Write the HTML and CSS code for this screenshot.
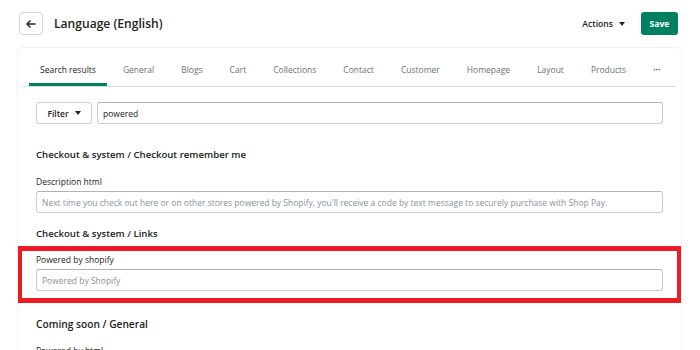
FILE: index.html
```html
<!DOCTYPE html>
<html lang="en">

<head>
    <meta charset="UTF-8">
    <title>Language (English)</title>
    <link rel="stylesheet" href="styles.css">
</head>

<body>
    <!-- ヘッダー -->
    <header class="pageHeader">
        <button class="backBtn" type="button">
            <svg width="12" height="12" viewBox="0 0 12 12">
                <path d="M10.5 6H2M5.5 2.5 2 6l3.5 3.5" fill="none" stroke="#202223" stroke-width="1.4" />
            </svg>
        </button>
        <h1 class="pageTitle">Language (English)</h1>
        <div class="headerActions">
            <button class="actionsBtn" type="button">Actions <span class="caret"></span></button>
            <button class="saveBtn" type="button">Save</button>
        </div>
    </header>

    <!-- カード -->
    <main class="card">
        <ul class="tabs">
            <li class="tab isActive">Search results</li>
            <li class="tab">General</li>
            <li class="tab">Blogs</li>
            <li class="tab">Cart</li>
            <li class="tab">Collections</li>
            <li class="tab">Contact</li>
            <li class="tab">Customer</li>
            <li class="tab">Homepage</li>
            <li class="tab">Layout</li>
            <li class="tab">Products</li>
            <li class="tab tabMore">&middot;&middot;&middot;</li>
        </ul>

        <div class="cardBody">
            <div class="filterRow">
                <button class="filterBtn" type="button">Filter <span class="caret"></span></button>
                <input class="textInput searchInput" type="text" value="powered">
            </div>

            <h2 class="groupTitle groupFirst">Checkout &amp; system / Checkout remember me</h2>
            <div class="field">
                <label class="fieldLabel">Description html</label>
                <input class="textInput" type="text" placeholder="Next time you check out here or on other stores powered by Shopify, you'll receive a code by text message to securely purchase with Shop Pay.">
            </div>

            <h2 class="groupTitle">Checkout &amp; system / Links</h2>
            <div class="field highlight">
                <label class="fieldLabel">Powered by shopify</label>
                <input class="textInput" type="text" placeholder="Powered by Shopify">
            </div>

            <h2 class="groupTitle groupTitleLarge">Coming soon / General</h2>
            <div class="field">
                <label class="fieldLabel">Powered by html</label>
            </div>
        </div>
    </main>
</body>

</html>
```

FILE: styles.css
```css
/* リセット */
body,
ul,
li,
h1,
h2,
button,
input,
label {
    margin: 0;
    padding: 0;
    box-sizing: border-box;
}

li {
    list-style: none;
}

body {
    height: 350px;
    background-color: #FFFFFF;
    font-family: 'Open Sans', 'Noto Sans', sans-serif;
    color: #202223;
    overflow: hidden;
}

/* ヘッダー */
.pageHeader {
    display: flex;
    align-items: center;
    height: 47px;
    padding: 0 22px 0 19px;
}

.backBtn {
    display: flex;
    align-items: center;
    justify-content: center;
    width: 24px;
    height: 23px;
    border: 1px solid #D2D5D8;
    border-radius: 4px;
    background-color: #FFFFFF;
}

.pageTitle {
    margin-left: 11px;
    font-size: 12.1px;
    font-weight: 600;
}

.headerActions {
    display: flex;
    align-items: center;
    margin-left: auto;
}

.actionsBtn {
    display: flex;
    align-items: center;
    border: none;
    background: none;
    font-family: inherit;
    font-size: 8.6px;
    font-weight: 600;
    color: #202223;
}

.caret {
    display: inline-block;
    margin-left: 6px;
    border-top: 4px solid #202223;
    border-left: 3px solid transparent;
    border-right: 3px solid transparent;
}

.saveBtn {
    width: 37px;
    height: 23px;
    margin-left: 16px;
    border: none;
    border-radius: 3px;
    background-color: #008060;
    font-family: inherit;
    font-size: 8.6px;
    font-weight: 700;
    color: #FFFFFF;
}

/* カード */
.card {
    height: 310px;
    margin: 0 18px 0 17px;
    border: 1px solid #F0F1F2;
    border-radius: 6px;
    overflow: hidden;
}

.tabs {
    display: flex;
    gap: 5px;
    margin: 0 5px;
    padding: 10px 0 0 6px;
    border-bottom: 1px solid #D9DADB;
}

.tab {
    height: 28px;
    padding: 0 11px;
    border-bottom: 3px solid transparent;
    font-size: 8.5px;
    line-height: 24px;
    color: #6D7175;
    white-space: nowrap;
}

.tab.isActive {
    color: #202223;
    border-bottom-color: #008060;
}

.tabMore {
    font-weight: 700;
    color: #5C5F62;
}

.cardBody {
    padding: 15px 18px 0;
}

.filterRow {
    display: flex;
    gap: 5px;
}

.filterBtn {
    display: flex;
    flex-shrink: 0;
    align-items: center;
    justify-content: center;
    width: 56px;
    height: 22px;
    border: 1px solid #C9CCCF;
    border-radius: 3px;
    background-color: #FFFFFF;
    font-family: inherit;
    font-size: 8.5px;
    font-weight: 600;
    color: #202223;
}

.textInput {
    flex-grow: 1;
    width: 100%;
    height: 22px;
    padding: 0 5px;
    border: 1px solid #C9CCCF;
    border-top-color: #AEB4B9;
    border-radius: 3px;
    font-family: inherit;
    font-size: 8.5px;
    color: #202223;
}

.textInput::placeholder {
    color: #8C9196;
}

.groupTitle {
    margin-top: 14px;
    margin-bottom: 14px;
    font-size: 9.6px;
    font-weight: 600;
    line-height: 14px;
}

.groupFirst {
    margin-top: 24px;
}

.groupTitleLarge {
    font-size: 10.2px;
}

.field {
    display: flex;
    flex-direction: column;
}

.fieldLabel {
    margin-bottom: 3px;
    font-size: 8.5px;
    line-height: 12px;
}

/* 強調枠 */
.highlight {
    margin: -9px -19px 0;
    padding: 3px 14px 7px;
    border: 5px solid #ED1C24;
}
```
